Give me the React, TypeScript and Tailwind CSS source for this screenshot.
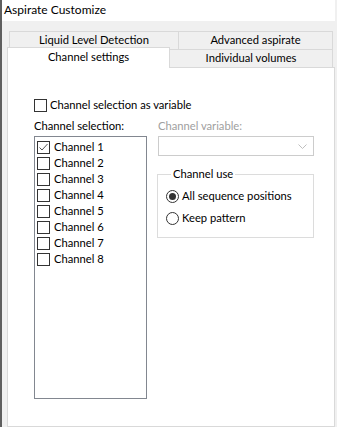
import React from "react";

const channels = [1, 2, 3, 4, 5, 6, 7, 8];

function CheckBox({ checked = false }: { checked?: boolean }) {
  return (
    <span className="w-[13px] h-[13px] border border-[#333333] bg-white flex items-center justify-center shrink-0">
      {checked && (
        <svg width="11" height="11" viewBox="0 0 11 11">
          <path d="M1.5 5.5 L4 8 L9.5 2" fill="none" stroke="#555555" strokeWidth="1" />
        </svg>
      )}
    </span>
  );
}

function Radio({ checked = false }: { checked?: boolean }) {
  return (
    <span className="w-[13px] h-[13px] rounded-full border border-[#333333] bg-white flex items-center justify-center shrink-0">
      {checked && <span className="w-[7px] h-[7px] rounded-full bg-[#333333]" />}
    </span>
  );
}

export default function App() {
  return (
    <div className="w-[337px] h-[427px] overflow-hidden bg-[#f0f0f0] flex font-['Lato',sans-serif] text-[11.2px] text-black">
      <div className="w-[2px] bg-[#5f5f5f]" />
      <div className="flex-1 flex flex-col">
        {/* title bar */}
        <div className="h-[21px] bg-white flex items-center pl-[2px] pb-[1px] text-[12px]">
          Aspirate Customize
        </div>

        <div className="flex-1 flex flex-col pt-[10px]">
          {/* back row of tabs */}
          <div className="flex ml-[7px] h-[18px]">
            <div className="w-[170px] border border-b-0 border-[#d9d9d9] flex items-center justify-center pb-[1px]">
              Liquid Level Detection
            </div>
            <div className="w-[154px] border border-b-0 border-l-0 border-[#d9d9d9] flex items-center justify-center pb-[1px]">
              Advanced aspirate
            </div>
          </div>

          {/* front row of tabs */}
          <div className="flex items-end ml-[5px] h-[21px] -mt-[2px]">
            <div className="relative z-10 w-[163px] h-[21px] bg-white border border-b-0 border-[#d9d9d9] flex items-center justify-center pb-[2px]">
              Channel settings
            </div>
            <div className="w-[163px] h-[19px] bg-[#f0f0f0] border-t border-r border-[#d9d9d9] flex items-center justify-center pb-[1px]">
              Individual volumes
            </div>
          </div>

          {/* page */}
          <div className="-mt-[1px] ml-[5px] w-[328px] flex-1 bg-white border border-[#d9d9d9] pl-[26px] pt-[29px]">
            <div className="flex items-center h-[16px]">
              <CheckBox />
              <span className="ml-[3px]">Channel selection as variable</span>
            </div>

            <div className="flex mt-[5px]">
              <div className="w-[113px] flex flex-col">
                <div className="h-[16px] leading-[16px]">Channel selection:</div>
                <div className="mt-[2px] h-[263px] border border-[#828790] pl-[2px] pt-[2px]">
                  {channels.map((n) => (
                    <div key={n} className="flex items-center h-[16px]">
                      <CheckBox checked={n === 1} />
                      <span className="ml-[4px]">Channel {n}</span>
                    </div>
                  ))}
                </div>
              </div>

              <div className="ml-[10px] w-[157px] flex flex-col">
                <div className="h-[16px] leading-[16px] ml-[1px] text-[#a0a0a0]">Channel variable:</div>
                <div className="mt-[2px] ml-[1px] h-[20px] border border-[#cccccc] bg-white flex items-center justify-end pr-[6px]">
                  <svg width="9" height="5" viewBox="0 0 9 5">
                    <path d="M0.5 0.5 L4.5 4.5 L8.5 0.5" fill="none" stroke="#bfbfbf" strokeWidth="1" />
                  </svg>
                </div>

                <fieldset className="mt-[11px] h-[71px] border border-[#dcdcdc] pl-[8px]">
                  <legend className="ml-[5px] px-[2px] leading-[14px]">Channel use</legend>
                  <div className="pt-[4px]">
                    <div className="flex items-center h-[22px]">
                      <Radio checked />
                      <span className="ml-[3px]">All sequence positions</span>
                    </div>
                    <div className="flex items-center h-[22px]">
                      <Radio />
                      <span className="ml-[3px]">Keep pattern</span>
                    </div>
                  </div>
                </fieldset>
              </div>
            </div>
          </div>
        </div>
      </div>
      <div className="w-[2px] bg-[#f0f0f0]" />
    </div>
  );
}
